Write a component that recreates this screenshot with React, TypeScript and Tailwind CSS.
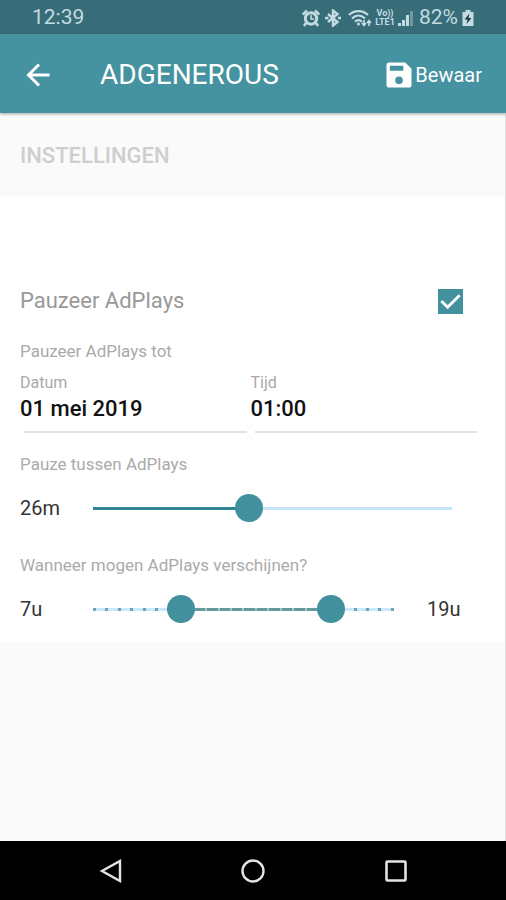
import { useState } from "react";

const APP_FONT = "font-[Roboto,sans-serif]";

const thumbStyle =
  "[&::-webkit-slider-thumb]:size-7 [&::-webkit-slider-thumb]:appearance-none [&::-webkit-slider-thumb]:rounded-full [&::-webkit-slider-thumb]:bg-[#43919f] [&::-webkit-slider-thumb]:pointer-events-auto";

const rangeBase =
  "[grid-area:1/1] h-7 w-full cursor-pointer appearance-none bg-transparent outline-none " + thumbStyle;

function StatusBar() {
  return (
    <div className="flex h-[34px] items-center justify-between bg-[#376d78] px-8 pt-[2px] text-[#c3dbe1]">
      <span className="text-[21px]">12:39</span>
      <div className="flex items-center gap-[2px]">
        <svg width="18" height="18" viewBox="0 0 18 18" fill="none" stroke="currentColor" aria-label="Wekker">
          <circle cx="9" cy="9.5" r="5.7" strokeWidth="3" />
          <path d="M9 6v4h3" strokeWidth="1.6" />
          <path d="M.8 5.500l4.200-4M17.200 5.500l-4.200-4M4 14l-2 3M14 14l2 3" strokeWidth="2.600" />
        </svg>
        <svg className="ml-[2px]" width="18" height="18" viewBox="0 0 18 18" fill="none" stroke="currentColor" strokeWidth="2.400" aria-label="Bluetooth">
          <path d="M4 5l9.500 8L9 16.500v-15L13.500 5 4 13" />
          <path d="M1 9h3.500M14 9h3" strokeWidth="2.600" />
        </svg>
        <svg className="ml-1" width="24" height="18" viewBox="0 0 24 18" fill="none" stroke="currentColor" strokeWidth="2.200" aria-label="Wifi">
          <path d="M1 6C6 .7 15 .7 20 6M4 9.500c4-3.800 9-3.800 13 0M7 12.800c2.300-2.200 4.700-2.200 7 0" />
          <circle cx="10.500" cy="15" r="1.500" fill="currentColor" stroke="none" />
          <path d="M16 11v5M14 14l2 2.500 2-2.500M21 17v-5M19 14l2-2.500 2 2.500" strokeWidth="1.600" />
        </svg>
        <span className="flex w-[22px] flex-col items-center text-[9px] leading-[9px] font-bold">
          <span>Vo))</span>
          <span>LTE1</span>
        </span>
        <svg width="15" height="17" viewBox="0 0 15 17" fill="currentColor" aria-label="Bereik">
          <path d="M0 13h3v3H0zM4 10h3v6H4zM8 5h3v11H8z" />
          <path d="M12 1h3v15h-3z" opacity=".4" />
        </svg>
        <span className="ml-1 text-[21px]">82%</span>
        <svg className="ml-[2px]" width="12" height="18" viewBox="0 0 12 18" aria-label="Batterij">
          <path d="M3.500 1h5v2H11.500v14H.5V3h3z" fill="currentColor" />
          <path d="M7.500 4.500L2.500 10.500h3L4.500 15 9.500 9H6.500z" fill="#1d3f47" />
        </svg>
      </div>
    </div>
  );
}

function AppBar() {
  return (
    <header className="z-10 flex h-[79px] items-center bg-[#4592a0] pt-[2px] pr-6 pl-[26px] text-white shadow-[0_1px_3px_rgba(0,0,0,0.35)]">
      <button type="button" aria-label="Terug">
        <svg width="24" height="24" viewBox="0 0 24 24" fill="none" stroke="currentColor" strokeWidth="3">
          <path d="M23.500 12H3M13 1.500L2.500 12 13 22.500" />
        </svg>
      </button>
      <h1 className="ml-[50px] flex-1 text-[28px]">ADGENEROUS</h1>
      <button type="button" className="flex items-center gap-[3px] text-xl">
        <svg width="26" height="26" viewBox="0 0 27 27" aria-hidden="true">
          <path
            fillRule="evenodd"
            fill="currentColor"
            d="M3.500 0.500H20L26.500 7v16.500a3 3 0 0 1-3 3h-20a3 3 0 0 1-3-3v-20a3 3 0 0 1 3-3zM4 4v5h14V4zM13.500 15a4 4 0 1 0 0 8 4 4 0 0 0 0-8z"
          />
        </svg>
        Bewaar
      </button>
    </header>
  );
}

function PauseSlider() {
  const [minutes, setMinutes] = useState(26);
  return (
    <div className="flex items-center pr-[19px]">
      <output className="w-[59px] text-xl text-[#333]">{minutes}m</output>
      <div className="grid flex-1 items-center">
        <div className="mx-[14px] h-[3px] bg-[#c3e4f5] [grid-area:1/1]">
          <div className="h-full bg-[#2f8593]" style={{ width: `${(minutes / 60) * 100}%` }} />
        </div>
        <input
          type="range"
          aria-label="Pauze tussen AdPlays"
          min={0}
          max={60}
          value={minutes}
          onChange={(e) => setMinutes(Number(e.target.value))}
          className={rangeBase}
        />
      </div>
    </div>
  );
}

function HoursSlider() {
  const [from, setFrom] = useState(7);
  const [to, setTo] = useState(19);
  const hours = Array.from({ length: 25 }, (_, h) => h);
  return (
    <div className="flex items-center">
      <output className="w-[59px] text-xl text-[#333]">{from}u</output>
      <div className="grid flex-1 items-center">
        <div className="mx-[14px] flex h-[3px] justify-between bg-[#c9e7f8] [grid-area:1/1]">
          {hours.map((h) => (
            <span key={h} className="w-[3px] bg-[#6fa3b0]" />
          ))}
        </div>
        <div className="mx-[14px] h-[3px] [grid-area:1/1]">
          <div
            className="h-full bg-[#659a9b]"
            style={{ width: `${((to - from) / 24) * 100}%`, marginLeft: `${(from / 24) * 100}%` }}
          />
        </div>
        <div className="mx-[14px] flex h-[3px] justify-between [grid-area:1/1]">
          {hours.map((h) => (
            <span key={h} className={h > from && h < to ? "w-[2px] bg-[#a3c7c6]" : "w-[2px]"} />
          ))}
        </div>
        <input
          type="range"
          aria-label="Vanaf"
          min={0}
          max={24}
          value={from}
          onChange={(e) => setFrom(Math.min(Number(e.target.value), to))}
          className={rangeBase + " pointer-events-none"}
        />
        <input
          type="range"
          aria-label="Tot"
          min={0}
          max={24}
          value={to}
          onChange={(e) => setTo(Math.max(Number(e.target.value), from))}
          className={rangeBase + " pointer-events-none"}
        />
      </div>
      <output className="ml-[19px] w-[58px] text-xl text-[#333]">{to}u</output>
    </div>
  );
}

function Field({ id, label, initial }: { id: string; label: string; initial: string }) {
  return (
    <div className="min-w-0 flex-1">
      <label htmlFor={id} className="block text-base leading-5 text-[#aaa]">
        {label}
      </label>
      <input
        id={id}
        type="text"
        defaultValue={initial}
        className="block h-[30px] w-full bg-transparent text-[22px] font-medium text-[#111] outline-none"
      />
      <div className="mx-1 mt-2 h-[2px] bg-[#e2e2e2]" />
    </div>
  );
}

export default function App() {
  return (
    <div className={"flex min-h-screen flex-col bg-[#fafafa] " + APP_FONT}>
      <StatusBar />
      <AppBar />
      <main className="flex flex-1 flex-col border-r border-[#dedede]">
        <h2 className="px-5 pt-[27px] pb-6 text-[22px] leading-8 font-medium text-[#cecece]">INSTELLINGEN</h2>
        <section className="bg-white px-5 pt-[89px] pb-5">
          <div className="flex items-center justify-between pr-[22px]">
            <label htmlFor="pause" className="text-[22px] leading-8 text-[#999]">
              Pauzeer AdPlays
            </label>
            <span className="grid">
              <input
                id="pause"
                type="checkbox"
                defaultChecked
                className="peer size-[25px] appearance-none border-2 border-[#43919f] [grid-area:1/1] checked:bg-[#43919f]"
              />
              <svg
                className="pointer-events-none invisible [grid-area:1/1] peer-checked:visible"
                width="25"
                height="25"
                viewBox="0 0 26 26"
                fill="none"
                stroke="white"
                strokeWidth="3"
                aria-hidden="true"
              >
                <path d="M3.500 12.500l6.500 6.500L22.500 6.500" />
              </svg>
            </span>
          </div>
          <p className="mt-6 text-[17px] leading-5 text-[#aaa]">Pauzeer AdPlays tot</p>
          <div className="mt-3 flex pr-1">
            <Field id="date" label="Datum" initial="01 mei 2019" />
            <Field id="time" label="Tijd" initial="01:00" />
          </div>
          <p className="mt-[21px] mb-5 text-[17px] leading-5 text-[#aaa]">Pauze tussen AdPlays</p>
          <PauseSlider />
          <p className="mt-[33px] mb-5 text-[17px] leading-5 text-[#aaa]">Wanneer mogen AdPlays verschijnen?</p>
          <HoursSlider />
        </section>
      </main>
      <nav className="flex h-[59px] items-center justify-around bg-black px-[39px] text-[#e4e4e4]">
        <button type="button" aria-label="Vorige">
          <svg width="24" height="24" viewBox="0 0 24 24" fill="none" stroke="currentColor" strokeWidth="2.400">
            <path d="M22 2v20L4 12z" />
          </svg>
        </button>
        <button type="button" aria-label="Startscherm">
          <svg width="24" height="24" viewBox="0 0 24 24" fill="none" stroke="currentColor" strokeWidth="2.400">
            <circle cx="12" cy="12" r="10.500" />
          </svg>
        </button>
        <button type="button" aria-label="Recente apps">
          <svg width="24" height="24" viewBox="0 0 24 24" fill="none" stroke="currentColor" strokeWidth="2.600">
            <rect x="2.500" y="2.500" width="19" height="19" rx="1" />
          </svg>
        </button>
      </nav>
    </div>
  );
}
